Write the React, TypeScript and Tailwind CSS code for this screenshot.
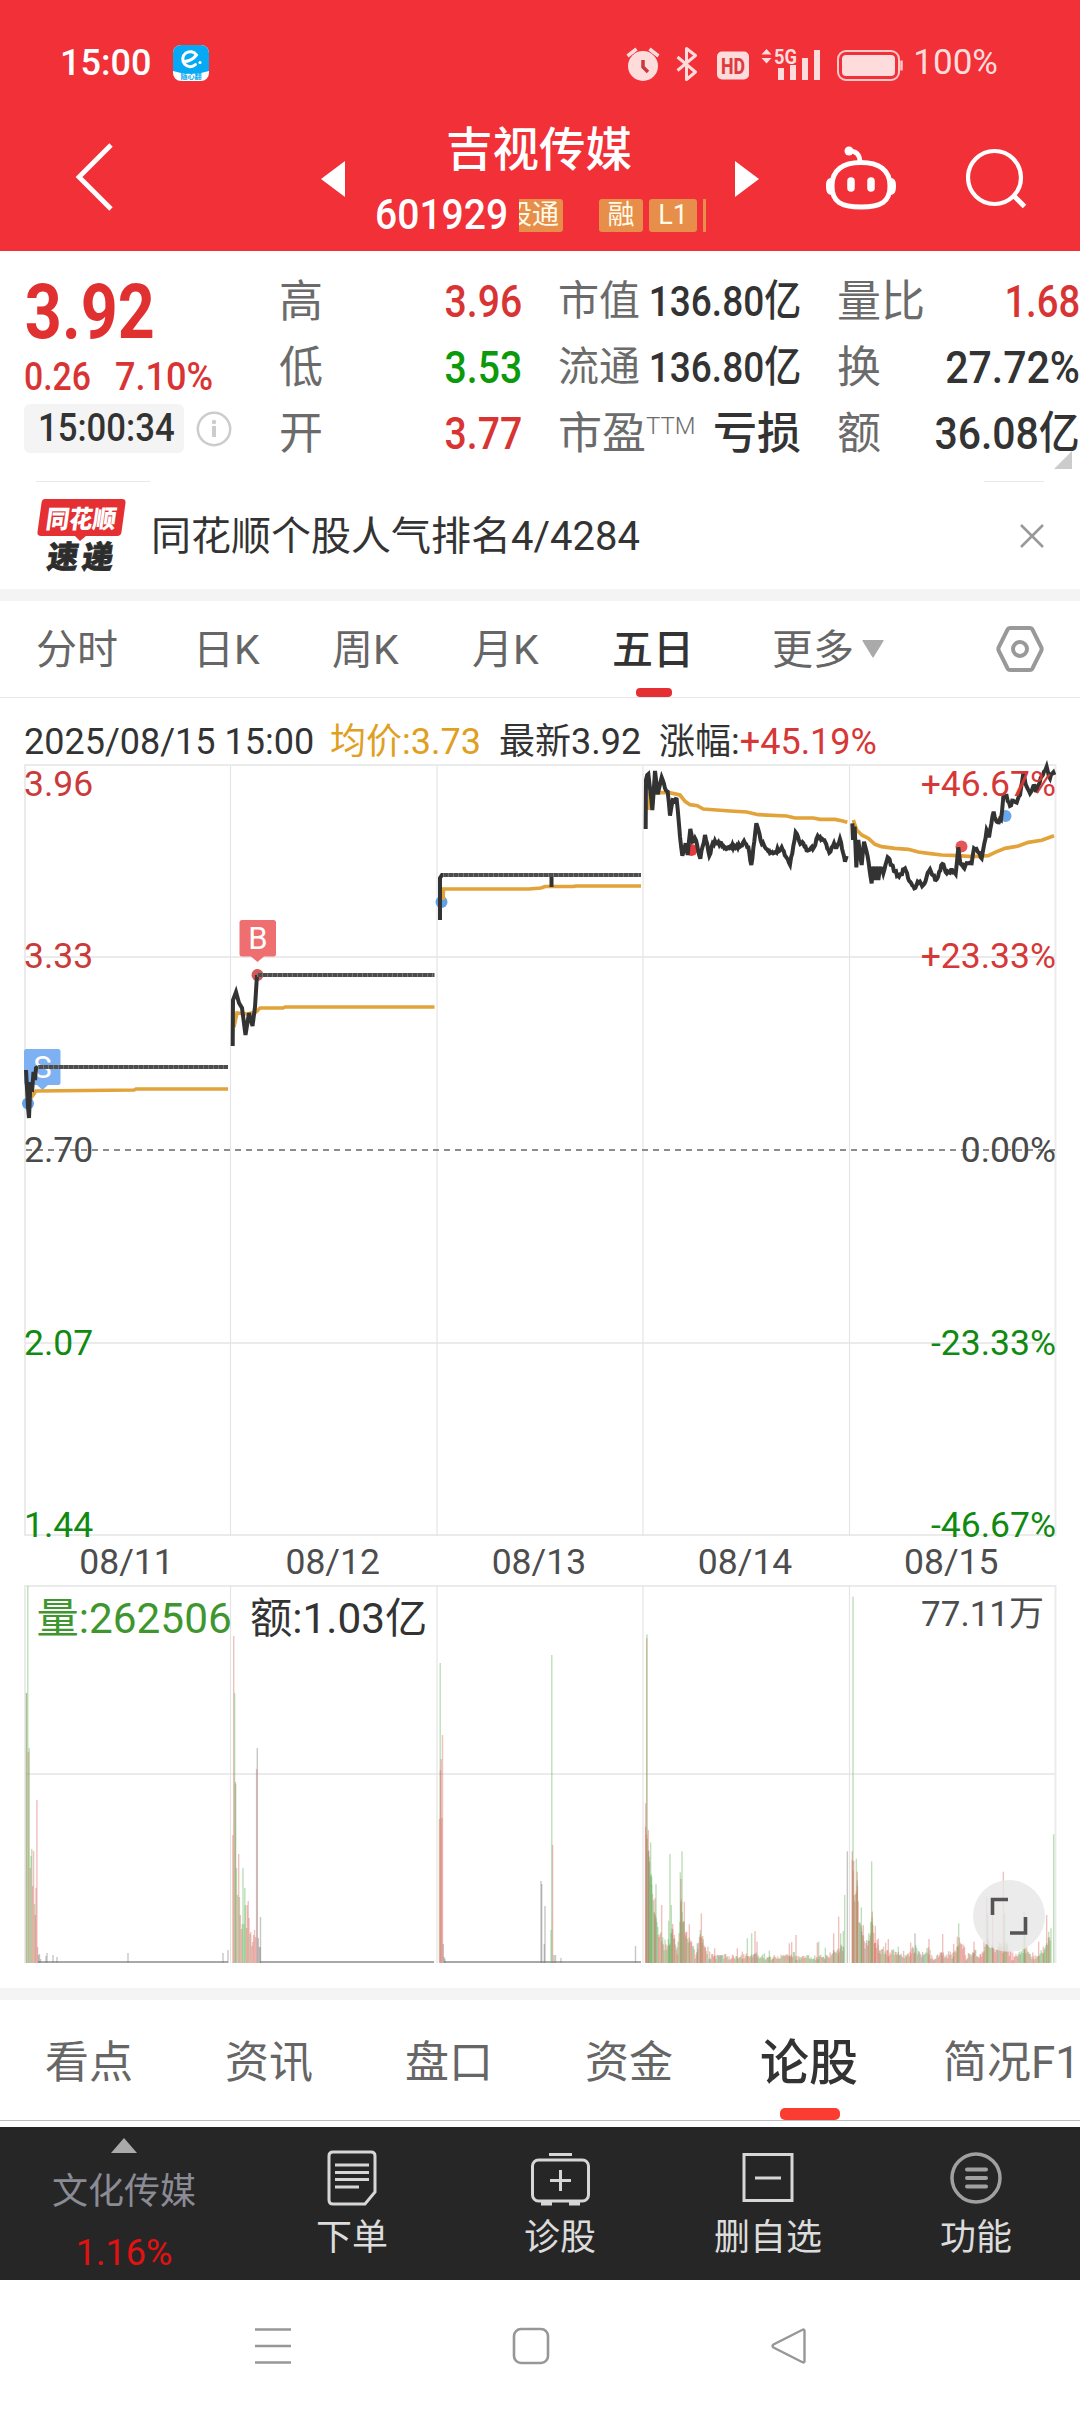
import React from "react";

type Pt = [number, number];

/* ---------- shared helpers ---------- */

function seeded(seed: number) {
  let s = seed;
  return () => {
    s = (s * 16807) % 2147483647;
    return s / 2147483647;
  };
}

const toPath = (pts: Pt[]) => "M" + pts.map((p) => p[0].toFixed(1) + " " + p[1].toFixed(1)).join("L");

/* Adds small tick-to-tick movement between the main turning points. */
function jitter(pts: Pt[], amp: number, seed: number): Pt[] {
  const rnd = seeded(seed);
  const out: Pt[] = [];
  for (let i = 0; i < pts.length - 1; i++) {
    const [x0, y0] = pts[i];
    const [x1, y1] = pts[i + 1];
    out.push([x0, y0]);
    const n = Math.floor((x1 - x0) / 3);
    for (let k = 1; k < n; k++) {
      out.push([x0 + ((x1 - x0) * k) / n, y0 + ((y1 - y0) * k) / n + (rnd() - 0.5) * amp]);
    }
  }
  out.push(pts[pts.length - 1]);
  return out;
}

/* ---------- status bar ---------- */

function StatusBar() {
  return (
    <div className="flex h-[126px] items-center pl-[60px] pr-[82px] text-white">
      <span className="w-[113px] text-[36px] font-medium leading-[40px]">15:00</span>
      <svg width="36" height="36" viewBox="0 0 36 36">
        <rect width="36" height="36" rx="8" fill="#fff" />
        <path d="M0 26V8a8 8 0 0 1 8-8h20a8 8 0 0 1 8 8v18q-18 6-36 0z" fill="#08a9f4" />
        <path d="M10.500 16.500q8 0 13-6.500a7.500 7.500 0 1 0-1 9.500" fill="none" stroke="#fff" strokeWidth="3" strokeLinecap="round" />
        <circle cx="27" cy="17.500" r="1.500" fill="#fff" />
        <text x="18" y="34" textAnchor="middle" fontSize="7" fontWeight="700" fill="#08a9f4">随心翻</text>
      </svg>
      <div className="ml-auto flex items-center text-[#ffdcdc]">
        <svg width="290" height="40" viewBox="0 0 290 40" className="mr-[-2px]">
          <g fill="#ffdcdc" stroke="none">
            <circle cx="18" cy="23" r="15" />
            <path d="M18 17v7l5 5" stroke="#c83a40" strokeWidth="3.500" fill="none" />
            <path d="M2.500 13l9-7M33.500 13l-9-7" stroke="#ffdcdc" strokeWidth="3.500" />
          </g>
          <path d="M52.500 14l18 15-9 7.500V5.500l9 7-18 15" fill="none" stroke="#ffdcdc" strokeWidth="3" strokeLinejoin="round" />
          <rect x="92" y="8.500" width="32" height="28" rx="5" fill="#ffdcdc" />
          <text x="108" y="30.500" textAnchor="middle" fontSize="22" fontWeight="800" fill="#dc3b42" textLength="24" lengthAdjust="spacingAndGlyphs">HD</text>
          <path d="M136.500 11.500l5-5.500 5 5.500zM136.500 15l5 5.500 5-5.500z" fill="#ffdcdc" />
          <text x="149" y="20.500" fontSize="20" fontWeight="700" fill="#ffdcdc" textLength="23" lengthAdjust="spacingAndGlyphs">5G</text>
          <path d="M153 25h6v12h-6zM165 22h6v15h-6zM177 15h6v22h-6zM189 7h6v30h-6z" fill="#ffdcdc" />
          <rect x="213" y="8" width="61" height="29" rx="8" fill="none" stroke="#ffc9ca" strokeWidth="2" />
          <rect x="217" y="12" width="53" height="21" rx="4" fill="#ffdcdc" />
          <path d="M276.500 17.500v10" stroke="#ffc9ca" strokeWidth="2.500" />
        </svg>
        <span className="text-[35px] leading-[40px]">100%</span>
      </div>
    </div>
  );
}

/* ---------- title bar ---------- */

function Tag({ children, width }: { children: React.ReactNode; width: string }) {
  return (
    <span className={"flex h-[33px] shrink-0 items-center justify-center rounded-[3px] bg-[#e68e4a] text-[27px] leading-[33px] text-[#fffbe8] " + width}>
      {children}
    </span>
  );
}

function TitleBar() {
  return (
    <div className="flex h-[125px] text-white">
      <div className="w-[321px] pt-[17px]">
        <svg width="40" height="68" viewBox="0 0 40 68" className="ml-[74px]">
          <path d="M37 2L5 34l32 32" fill="none" stroke="#fff" strokeWidth="4.800" />
        </svg>
      </div>
      <svg width="24" height="36" viewBox="0 0 24 36" className="mt-[35px]"><path d="M24 0v36L0 18z" fill="#fff" /></svg>
      <div className="flex w-[390px] flex-col items-start pl-[30px]">
        <h1 className="w-full whitespace-nowrap pl-[71px] text-[46.500px] font-medium leading-[48px]">吉视传媒</h1>
        <div className="mt-[19px] flex h-[44px] items-center">
          <span className="w-[144px] origin-left scale-x-[0.93] whitespace-nowrap text-[42px] font-medium leading-[44px]">601929</span>
          <div className="flex h-[33px] w-[187px] justify-end overflow-hidden">
            <Tag width="w-[62px]">股通</Tag>
            <span className="w-[36px] shrink-0" />
            <Tag width="w-[44px]">融</Tag>
            <span className="w-[6px] shrink-0" />
            <Tag width="w-[48px]">L1</Tag>
            <span className="ml-[6px] w-[3px] shrink-0 bg-[#e68e4a]" />
          </div>
        </div>
      </div>
      <svg width="24" height="36" viewBox="0 0 24 36" className="mt-[35px]"><path d="M0 0v36l24-18z" fill="#fff" /></svg>
      <svg width="72" height="66" viewBox="0 0 72 66" className="ml-[66px] mt-[19px]" fill="none" stroke="#fff">
        <path d="M36 17.500C54 17.500 65 25 65 41S56 62 36 62 7 57 7 41 18 17.500 36 17.500z" strokeWidth="5" />
        <path d="M35 17c0-8-4-11-11-11" strokeWidth="4.500" />
        <circle cx="24" cy="6" r="4.500" fill="#fff" stroke="none" />
        <path d="M7 33v17C2 50 1 46 1 41s1-8 6-8zM65 33v17c5 0 6-4 6-9s-1-8-6-8z" fill="#fff" stroke="none" />
        <path d="M26 36v7M46 36v7" strokeWidth="7.500" strokeLinecap="round" />
      </svg>
      <svg width="62" height="62" viewBox="0 0 62 62" className="ml-[69px] mt-[22px]" fill="none" stroke="#fff" strokeWidth="4.200">
        <circle cx="28.500" cy="29.500" r="26.500" />
        <path d="M48 48l10.500 10.500" strokeWidth="5" />
      </svg>
    </div>
  );
}

/* ---------- quote summary ---------- */

const RED = "text-[#d93434]";
const GREEN = "text-[#0c9a0c]";
const INK = "text-[#333333]";

function Cell({ label, value, color, fit = "scale-x-[0.87] text-[45px]" }: { label: string; value: string; color: string; fit?: string }) {
  return (
    <div className="flex h-[66px] items-center pt-[1px]">
      <span className="shrink-0 whitespace-nowrap text-[#6b6b6b]">{label}</span>
      <span className="flex min-w-0 flex-1 justify-end">
        <span className={"origin-right whitespace-nowrap font-medium " + color + " " + fit}>{value}</span>
      </span>
    </div>
  );
}

function Quote() {
  return (
    <section className="flex h-[230px] bg-white">
      <div className="w-[256px] pl-[24px] pt-[19px]">
        <div className="h-[84px] w-[160px] origin-left scale-x-[0.85] whitespace-nowrap pl-[1px] text-[76px] font-bold leading-[84px] text-[#e03030]">3.92</div>
        <div className={"mt-[3px] flex h-[40px] text-[38px] font-medium leading-[40px] " + RED}>
          <span className="w-[91px] origin-left scale-x-[0.89]">0.26</span>
          <span className="origin-left scale-x-[0.95]">7.10%</span>
        </div>
        <div className="mt-[7px] flex items-center">
          <div className="flex h-[49px] w-[160px] items-center rounded-[6px] bg-[#f4f4f4] pl-[14px]">
            <span className="origin-left scale-x-[0.89] text-[39px] font-medium leading-[49px] text-[#333]">15:00:34</span>
          </div>
          <svg width="36" height="36" viewBox="0 0 36 36" className="ml-[12px]">
            <circle cx="18" cy="18" r="16.200" fill="none" stroke="#ccc" strokeWidth="2.500" />
            <path d="M18 15v11" stroke="#ccc" strokeWidth="4" />
            <circle cx="18" cy="11" r="2.200" fill="#ccc" />
          </svg>
        </div>
      </div>
      <div className="w-[266px] pl-[23px] pt-[17px] text-[44px]">
        <Cell label="高" value="3.96" color={RED} />
        <Cell label="低" value="3.53" color={GREEN} />
        <Cell label="开" value="3.77" color={RED} />
      </div>
      <div className="w-[279px] pl-[36px] pt-[17px] text-[41px]">
        <Cell label="市值" value="136.80亿" color={INK} fit="scale-x-[0.86] text-[43px]" />
        <Cell label="流通" value="136.80亿" color={INK} fit="scale-x-[0.86] text-[43px]" />
        <div className="flex h-[66px] items-center pt-[1px]">
          <span className="shrink-0 text-[44px] text-[#6b6b6b]">市盈</span>
          <span className="mb-[16px] shrink-0 text-[24px] font-light leading-[24px] text-[#6b6b6b]">TTM</span>
          <span className="ml-auto shrink-0 text-[44px] font-medium text-[#333]">亏损</span>
        </div>
      </div>
      <div className="relative w-[279px] pl-[36px] pt-[17px] text-[44px]">
        <Cell label="量比" value="1.68" color={RED} fit="scale-x-[0.85] text-[45px]" />
        <Cell label="换" value="27.72%" color={INK} fit="scale-x-[0.91] text-[45px]" />
        <Cell label="额" value="36.08亿" color={INK} fit="scale-x-[0.91] text-[45px]" />
        <svg width="18" height="18" className="absolute bottom-[12px] right-[8px]"><path d="M18 0v18H0z" fill="#ccc" /></svg>
      </div>
    </section>
  );
}

/* ---------- news strip ---------- */

function NewsStrip() {
  return (
    <section className="h-[108px] bg-white">
      <div className="flex justify-between pl-[36px] pr-[36px]">
        <span className="h-px w-[114px] bg-[#e8e8e8]" />
        <span className="h-px w-[60px] bg-[#e8e8e8]" />
      </div>
      <div className="flex h-[107px] items-center pl-[36px] pr-[36px]">
        <svg width="92" height="76" viewBox="0 0 92 76" className="shrink-0">
          <path d="M9 1h77q4 0 3.500 4l-4 29q-.500 4-4.500 4H50l-6 5-5-5H5q-4 0-3.500-4l4-29Q6 1 9 1z" fill="#e53033" />
          <text transform="translate(9 30) skewX(-8)" fontSize="25" fontWeight="900" fill="#fff" textLength="70" lengthAdjust="spacingAndGlyphs">同花顺</text>
          <text transform="translate(10 70) skewX(-8)" fontSize="31" fontWeight="900" fill="#2d2d2d" textLength="66" stroke="#2d2d2d" strokeWidth="0.800">速递</text>
        </svg>
        <span className="ml-[23px] pt-[3px] text-[40px] leading-[48px] text-[#333]">同花顺个股人气排名4/4284</span>
        <svg width="24" height="24" viewBox="0 0 24 24" className="ml-auto"><path d="M1 1l22 22M23 1L1 23" stroke="#999" strokeWidth="2.600" /></svg>
      </div>
    </section>
  );
}

/* ---------- period tabs ---------- */

function PeriodTabs() {
  return (
    <nav className="flex h-[97px] border-b border-[#e6e6e6] bg-white pl-[36px] text-[41px] leading-[99px] text-[#666]">
      <span className="w-[157px]">分时</span>
      <span className="w-[139px]">日K</span>
      <span className="w-[140px]">周K</span>
      <span className="w-[140px]">月K</span>
      <span className="relative w-[160px] font-medium text-[#333]">
        五日
        <span className="absolute bottom-0 left-[24px] h-[9px] w-[36px] rounded-[4px] bg-[#e53033]" />
      </span>
      <span className="w-[90px]">更多</span>
      <svg width="22" height="18" viewBox="0 0 22 18" className="mt-[39px]"><path d="M1 0h20q1 0 .5 1L11.700 17q-.700 1-1.400 0L.5 1Q0 0 1 0z" fill="#aaa" /></svg>
      <svg width="50" height="48" viewBox="0 0 50 48" className="ml-[111px] mt-[24px]" fill="none" stroke="#999" strokeWidth="4">
        <path d="M15 3h20q1.500 0 2.300 1.300l9 18q.700 1.700 0 3.400l-9 18q-.800 1.300-2.300 1.300H15q-1.500 0-2.300-1.300l-9-18q-.700-1.700 0-3.400l9-18Q13.500 3 15 3z" />
        <circle cx="25" cy="24" r="7" />
      </svg>
    </nav>
  );
}

/* ---------- price chart ---------- */

const price4: Pt[] = [[17,207],[18,60],[25,42],[37,150],[45,33],[53,103],[65,52],[75,85],[83,95],[90,167],[98,120],[110,118],[120,230],[127,287],[137,250],[143,285],[151,207],[158,245],[165,235],[181,296],[195,225],[208,287],[218,250],[235,246],[250,258],[268,264],[283,258],[300,260],[312,243],[325,262],[334,315],[349,190],[362,242],[375,262],[390,280],[400,280],[425,262],[450,314],[467,217],[478,245],[490,250],[503,272],[522,262],[533,228],[550,240],[568,278],[582,250],[590,262],[600,237],[615,305],[620,288]];
const avg4: Pt[] = [[26,150],[30,100],[66,98],[88,98],[120,105],[135,124],[150,134],[172,137],[190,147],[230,150],[270,153],[320,156],[355,164],[440,168],[465,174],[520,174],[540,178],[585,178],[605,182],[622,187]];
const price5: Pt[] = [[22,190],[24,240],[29,200],[34,322],[40,240],[50,315],[57,245],[68,290],[80,370],[83,320],[90,360],[94,320],[100,360],[106,325],[115,340],[128,292],[140,315],[150,335],[162,350],[180,325],[192,362],[208,385],[218,365],[235,375],[245,350],[255,328],[273,360],[292,312],[305,340],[318,330],[332,342],[340,262],[346,310],[358,325],[368,310],[380,310],[387,265],[398,275],[410,295],[418,250],[425,210],[432,232],[446,155],[455,185],[468,180],[475,110],[485,108],[495,138],[505,122],[515,128],[525,105],[535,40],[545,80],[555,100],[565,78],[575,92],[590,50],[597,35],[605,20],[615,55],[622,40],[628,45]];
const avg5: Pt[] = [[25,180],[35,210],[50,225],[70,235],[90,253],[110,260],[150,265],[190,268],[220,276],[250,280],[290,285],[340,287],[380,290],[430,287],[450,277],[480,265],[520,258],[550,247],[590,241],[627,227]];

const DAYS = ["08/11", "08/12", "08/13", "08/14", "08/15"];
const GRID_X = [230.5, 437, 643, 849.5];

/* The drawing keeps page-like y units: 760 is its top edge. */
function PriceChart() {
  const orange = "#e2a33a";
  const ink = "#333";
  return (
    <svg width="1080" height="822" viewBox="0 760 1080 822" className="block">
      <g stroke="#ebebeb" strokeWidth="2" fill="none">
        <path d="M24 765H1056M24 957H1056M24 1343H1056M24 1535H1056M25 764V1536M1055.500 764V1536" />
      </g>
      <path d={GRID_X.map((x) => `M${x} 766V1536`).join("")} stroke="#e4e4e4" strokeWidth="1.200" />
      <path d="M26 1150H1055" stroke="#8c8c8c" strokeWidth="1.800" strokeDasharray="6 5" />

      <circle cx="28" cy="1103.500" r="6" fill="#639fe4" />
      <circle cx="257.500" cy="975" r="6" fill="#d85558" />
      <circle cx="441.500" cy="902" r="6" fill="#639fe4" />
      <circle cx="691.500" cy="850" r="6" fill="#e63a3a" />
      <circle cx="961.500" cy="846.500" r="6" fill="#e4565a" />
      <circle cx="1005.500" cy="816" r="6" fill="#6aa6ec" />

      <path d="M26 1049h32q2.500 0 2.500 2.500v31q0 2.500-2.500 2.500h-10l-5.500 5-5.500-5h-11q-2 0-2-2.500v-31q0-2.500 2-2.500z" fill="#7db1f2" />
      <text x="42.500" y="1078" textAnchor="middle" fontSize="31" fill="#fff">S</text>
      <path d="M242 920h31.500q2.500 0 2.500 2.500v31.500q0 2.500-2.500 2.500h-9.500l-6.500 5.500-6.500-5.500h-9q-2.500 0-2.500-2.500v-31.500q0-2.500 2.500-2.500z" fill="#ef6f70" />
      <text x="258" y="949" textAnchor="middle" fontSize="31" fill="#fff">B</text>

      <g fill="none" stroke={orange} strokeWidth="3.600">
        <path d="M31 1098L36 1091 134 1090 136 1089H228" />
        <path d="M234 1027L237 1013 247 1014 256 1012 260 1008H283L285 1007H434.500" />
        <path d="M443 900L443.500 889H529L541 888 545 886.500H573L576 886H641" />
        <g transform="translate(640 760) scale(0.33333)" strokeWidth="11"><path d={toPath(avg4)} /></g>
        <g transform="translate(845 760) scale(0.33333)" strokeWidth="11"><path d={toPath(avg5)} /></g>
      </g>

      <g fill="none" stroke={ink} strokeWidth="4">
        <path d="M26 1070L28 1107 29 1118 30.500 1082 32 1092 33.500 1072 35 1080 36 1068 38 1067" />
        <path d="M232.700 1046L233 1000 236 992 239 1003 242 1008 245.500 1035 249 1013 252.500 1026 255 1007 257 975" />
        <path d="M440 920V878L442 875H444M551.500 875V887" />
        <g stroke="#4d4d4d">
          <path d="M38 1067H228M257 975H434.500M443 875H641" />
          <path d="M38 1067H228M257 975H434.500M443 875H641" stroke="#777" strokeDasharray="1 4" />
        </g>
        <g transform="translate(640 760) scale(0.33333)" strokeWidth="12"><path d={toPath(jitter(price4, 12, 11))} /></g>
        <g transform="translate(845 760) scale(0.33333)" strokeWidth="12"><path d={toPath(jitter(price5, 12, 29))} /></g>
      </g>

      <g fontSize="35.500">
        <g fill="#c93a3a">
          <text x="24" y="796">3.96</text>
          <text x="24" y="968">3.33</text>
        </g>
        <text x="24" y="1161.500" fill="#4a4a4a">2.70</text>
        <g fill="#108a10">
          <text x="24" y="1355">2.07</text>
          <text x="24" y="1537">1.44</text>
        </g>
        <g textAnchor="end">
          <g fill="#d63838">
            <text x="1056" y="796">+46.67%</text>
            <text x="1056" y="968">+23.33%</text>
          </g>
          <text x="1056" y="1161.500" fill="#4a4a4a">0.00%</text>
          <g fill="#108a10">
            <text x="1056" y="1355">-23.33%</text>
            <text x="1056" y="1537">-46.67%</text>
          </g>
        </g>
        <g textAnchor="middle" fill="#4d4d4d">
          {DAYS.map((d, i) => (
            <text key={d} x={126.5 + i * 206.2} y="1574">{d}</text>
          ))}
        </g>
      </g>
    </svg>
  );
}

/* ---------- volume chart ---------- */

type Bar = [number, number, "r" | "g" | "k"];

const quietBars: Bar[] = [
  [26.5,1693,"r"],[26.5,1693,"g"],[27.8,1586,"g"],[28.5,1752,"r"],[29.2,1748,"g"],[30.2,1868,"r"],[31,1856,"g"],[31.8,1849,"g"],[32.6,1886,"r"],[33.6,1851,"r"],[34.5,1904,"g"],[35.3,1915,"r"],[36,1888,"r"],[36.9,1800,"r"],[37.6,1947,"r"],[38.5,1955,"k"],[39.5,1954,"k"],[40.5,1959,"k"],[47,1953,"k"],[46,1956,"k"],[53,1955,"k"],[57,1957,"k"],[128,1953,"k"],[223,1953,"k"],[228,1950,"k"],
  [232.8,1835,"r"],[233.7,1636,"r"],[234.6,1693,"g"],[235.4,1782,"r"],[235.6,1784,"g"],[236.5,1868,"g"],[237.5,1895,"r"],[238.7,1854,"r"],[239.4,1897,"g"],[240.3,1915,"r"],[241.5,1929,"r"],[242.3,1924,"g"],[243,1868,"g"],[244,1924,"g"],[244.8,1888,"g"],[245.4,1905,"g"],[246.6,1928,"r"],[247.2,1905,"r"],[248.2,1901,"r"],[249,1918,"r"],[250,1934,"g"],[250.8,1932,"r"],[251.8,1946,"r"],[252.8,1942,"r"],[253.6,1935,"r"],[254.5,1930,"r"],[255.5,1937,"r"],[256.6,1769,"r"],[257.3,1748,"k"],[258.3,1938,"k"],[259.2,1947,"k"],[260.5,1917,"k"],[260.2,1947,"k"],
  [439.5,1819,"r"],[440.2,1663,"g"],[440.4,1770,"r"],[441.2,1759,"r"],[441.8,1818,"r"],[442.5,1735,"r"],[443.3,1944,"k"],[444.2,1957,"k"],[445,1959,"k"],[541,1881,"k"],[541.7,1884,"k"],[544.3,1944,"k"],[545,1906,"k"],[551,1930,"g"],[551.8,1655,"g"],[552.6,1845,"r"],[554,1955,"k"],[555.5,1955,"k"],[561,1958,"k"],[635.5,1946,"k"],
];

/* Busy sessions: [x, top] turning points of the volume profile, three units to a pixel. */
const busy: { spikes: Bar[]; floor: Pt[] }[] = [
  {
    floor: [[257,1000],[266,1060],[275,1150],[283,1250],[295,1300],[310,1330],[320,1345],[328,1330],[336,1285],[352,1355],[364,1200],[370,1270],[380,1310],[395,1345],[408,1368],[422,1300],[436,1340],[450,1370],[520,1372],[590,1366],[640,1374],[690,1362],[720,1374],[800,1372],[835,1350],[853,1340]],
    spikes: [[257,910,"r"],[260,415,"r"],[261,403,"g"],[265,990,"r"],[268,1070,"g"],[272,1027,"g"],[275,1130,"g"],[285,1195,"r"],[288,1153,"g"],[305,1215,"r"],[326,1262,"g"],[330,1062,"g"],[334,1215,"g"],[338,1272,"r"],[343,1305,"r"],[361,1117,"g"],[363,1137,"r"],[366,1054,"g"],[373,1205,"r"],[378,1295,"r"],[388,1273,"r"],[412,1330,"k"],[421,1290,"g"],[424,1240,"r"],[428,1308,"r"],[464,1345,"r"],[532,1345,"r"],[547,1355,"r"],[562,1315,"g"],[575,1300,"g"],[585,1293,"r"],[591,1325,"r"],[628,1352,"g"],[688,1330,"r"],[695,1326,"r"],[708,1305,"r"],[772,1328,"r"],[776,1325,"g"],[796,1343,"g"],[821,1300,"r"],[836,1250,"r"],[842,1300,"g"],[850,1293,"g"],[854,1185,"g"],[862,1054,"k"]],
  },
  {
    floor: [[877,1090],[884,1200],[892,1150],[897,1270],[905,1290],[915,1340],[928,1340],[936,1260],[944,1320],[960,1350],[985,1360],[1010,1355],[1040,1370],[1062,1345],[1080,1368],[1105,1350],[1120,1378],[1145,1362],[1180,1368],[1198,1330],[1220,1370],[1242,1360],[1262,1370],[1280,1330],[1300,1345],[1340,1345],[1360,1375],[1395,1350],[1420,1375],[1455,1350],[1473,1310]],
    spikes: [[877,1054,"r"],[879,290,"g"],[881,1083,"r"],[889,1076,"g"],[892,1115,"r"],[904,1222,"g"],[910,1275,"r"],[926,1300,"g"],[932,1265,"g"],[935,1084,"g"],[937,1235,"r"],[946,1278,"r"],[955,1315,"r"],[977,1328,"r"],[985,1317,"r"],[1015,1340,"g"],[1052,1328,"r"],[1065,1300,"k"],[1107,1317,"r"],[1148,1302,"r"],[1181,1332,"r"],[1192,1310,"r"],[1196,1270,"g"],[1242,1325,"r"],[1272,1325,"r"],[1280,1190,"r"],[1283,1240,"g"],[1298,1240,"r"],[1330,1115,"r"],[1334,1240,"g"],[1392,1233,"g"],[1395,1290,"g"],[1436,1325,"r"],[1450,1340,"r"],[1460,1245,"r"],[1466,1295,"g"],[1473,1285,"g"],[1481,1003,"g"]],
  },
];

function busyBars(): Bar[] {
  const rnd = seeded(77);
  const out: Bar[] = [];
  busy.forEach(({ floor, spikes }) => {
    for (let i = 0; i < floor.length - 1; i++) {
      const [x0, y0] = floor[i];
      const [x1, y1] = floor[i + 1];
      for (let x = x0; x < x1; x += 2.6) {
        const y = y0 + ((y1 - y0) * (x - x0)) / (x1 - x0) + (rnd() - 0.55) * Math.min(36, 0.6 * (1400 - y0));
        const c = rnd();
        out.push([560 + x / 3, 1500 + Math.min(y, 1381) / 3, c < 0.5 ? "r" : c < 0.93 ? "g" : "k"]);
      }
    }
    spikes.forEach(([x, y, c]) => out.push([560 + x / 3, 1500 + y / 3, c]));
  });
  return out;
}

const BAR_FILL = { r: "#dc6a60", g: "#62b257", k: "#777777" };

function VolumeChart() {
  const bars = [...quietBars, ...busyBars()];
  return (
    <svg width="1080" height="406" viewBox="0 1582 1080 406" className="block">
      <path d="M24 1586H1056M24 1774H1056M25 1585V1963M1055.500 1585V1963" stroke="#ebebeb" strokeWidth="2" />
      <path d={GRID_X.map((x) => `M${x} 1585V1963`).join("")} stroke="#e4e4e4" strokeWidth="1.200" />
      <path d="M38 1962H228M260 1962H434M444 1962H641" stroke="#a8a8a8" strokeWidth="2" />
      {bars.map(([x, top, c], i) => (
        <rect key={i} x={x - 0.7} y={top} width="1.400" height={1963 - top} fill={BAR_FILL[c]} opacity="0.42" />
      ))}
      <g fontSize="42.300">
        <text x="36.500" y="1633" fill="#3f962f">量:262506</text>
        <text x="250" y="1633" fill="#333">额:1.03亿</text>
      </g>
      <text x="1044" y="1626" textAnchor="end" fontSize="35" fill="#4d4d4d">77.11万</text>
      <circle cx="1009" cy="1916" r="36" fill="#e6e6e6" opacity="0.8" />
      <path d="M992.500 1915V1899.500H1008M1010 1933H1025.500V1917" fill="none" stroke="#555" strokeWidth="3.600" />
    </svg>
  );
}

/* ---------- bottom tabs ---------- */

function SectionTabs() {
  return (
    <nav className="flex h-[121px] items-center overflow-hidden whitespace-nowrap border-b border-[#bdbdbd] bg-white pl-[45px] text-[44px] text-[#666]">
      <span className="w-[180px] shrink-0 pt-[5px]">看点</span>
      <span className="w-[180px] shrink-0 pt-[5px]">资讯</span>
      <span className="w-[180px] shrink-0 pt-[5px]">盘口</span>
      <span className="w-[175px] shrink-0 pt-[5px]">资金</span>
      <span className="relative flex h-full w-[183px] shrink-0 items-center pt-[7px] text-[49px] font-medium text-[#333]">
        论股
        <span className="absolute bottom-0 left-[20px] h-[12px] w-[60px] rounded-[5px] bg-[#fb3c31]" />
      </span>
      <span className="shrink-0 pt-[5px]">简况F10</span>
    </nav>
  );
}

function ToolItem({ label, children }: { label: string; children: React.ReactNode }) {
  return (
    <div className="flex w-[208px] flex-col items-center pt-[21px]">
      <svg width="62" height="60" viewBox="0 0 62 60" fill="none" stroke="#d6d6d6" strokeWidth="3">{children}</svg>
      <span className="mt-[8px] text-[36px] leading-[44px] text-[#dcdcdc]">{label}</span>
    </div>
  );
}

function Toolbar() {
  return (
    <div className="flex h-[153px] bg-[#262626]">
      <div className="flex w-[248px] flex-col items-center pt-[11px]">
        <svg width="26" height="15" viewBox="0 0 26 15"><path d="M13 0l13 15H0z" fill="#aaa" /></svg>
        <span className="mt-[17px] text-[36px] leading-[44px] text-[#8b8b95]">文化传媒</span>
        <span className="mt-[19px] text-[36px] leading-[40px] text-[#e01212]">1.16%</span>
      </div>
      <ToolItem label="下单">
        <path d="M12 4h38q4 0 4 4v36L44 56H12q-4 0-4-4V8q0-4 4-4z" />
        <path d="M14 17h34M14 24.500h34M14 31.500h34M14 39h24" strokeWidth="3" />
      </ToolItem>
      <ToolItem label="诊股">
        <rect x="3.500" y="12" width="56" height="41" rx="6" />
        <path d="M20 6.500h23M31.500 22v21M21 32.500h21" />
        <path d="M12 54h11v3.500H12zM40 54h11v3.500H40z" fill="#d6d6d6" stroke="none" />
      </ToolItem>
      <ToolItem label="删自选">
        <rect x="7" y="6.500" width="48" height="46" />
        <path d="M18 30h26" />
      </ToolItem>
      <ToolItem label="功能">
        <g stroke="#a0a0a0">
          <circle cx="31" cy="30" r="24" strokeWidth="3.500" />
          <path d="M22 21.500h19M22 30h19M22 38.500h19" strokeWidth="4" strokeLinecap="round" />
        </g>
      </ToolItem>
    </div>
  );
}

function SystemNav() {
  return (
    <div className="flex h-[132px] items-center gap-[220px] bg-white pl-[254px]">
      <svg width="38" height="38" viewBox="0 0 38 38"><path d="M1 2.500h36M1 19h36M1 35.500h36" stroke="#979797" strokeWidth="2.600" /></svg>
      <svg width="38" height="38" viewBox="0 0 38 38"><rect x="2" y="2" width="34" height="34" rx="7" fill="none" stroke="#979797" strokeWidth="2.600" /></svg>
      <svg width="38" height="38" viewBox="0 0 38 38"><path d="M34.500 4v30q0 2-2 1.200L3.500 20.500q-2-1.500 0-3L32.500 2.800q2-.800 2 1.200z" fill="none" stroke="#979797" strokeWidth="2.400" /></svg>
    </div>
  );
}

export default function App() {
  return (
    <div className="h-[2412px] w-[1080px] overflow-hidden bg-white font-['Roboto','Noto_Sans_CJK_SC',sans-serif]">
      <header className="h-[251px] bg-[#f13038]">
        <StatusBar />
        <TitleBar />
      </header>
      <Quote />
      <NewsStrip />
      <div className="h-[12px] bg-[#f4f4f4]" />
      <PeriodTabs />
      <div className="flex h-[62px] items-start whitespace-nowrap pl-[24px] pt-[24px] text-[36px] leading-[40px] text-[#333]">
        <span className="w-[306px]">2025/08/15 15:00</span>
        <span className="w-[169px] text-[#dfa01f]">均价:3.73</span>
        <span className="w-[160px]">最新3.92</span>
        <span>涨幅:<span className="text-[#d63838]">+45.19%</span></span>
      </div>
      <PriceChart />
      <VolumeChart />
      <div className="h-[12px] bg-[#f4f4f4]" />
      <SectionTabs />
      <div className="h-[6px]" />
      <Toolbar />
      <SystemNav />
    </div>
  );
}
